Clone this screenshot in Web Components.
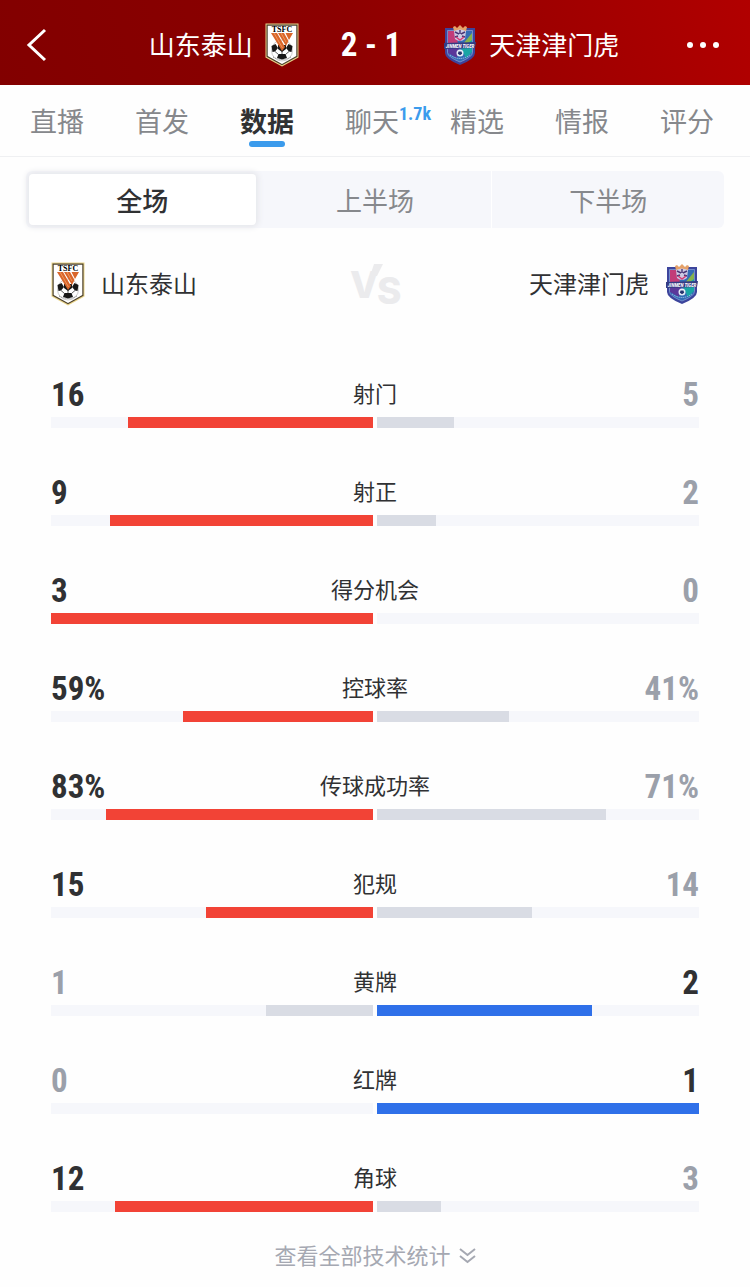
<!DOCTYPE html>
<html lang="zh-CN">
<head>
<meta charset="utf-8">
<meta name="viewport" content="width=device-width, initial-scale=1">
<title>山东泰山 2 - 1 天津津门虎</title>
<style>
    body {
        margin: 0;
        background: #fefefe;
        color: #303133;
        font-family: "Noto Sans CJK SC", sans-serif;
        --num-font: "Roboto Condensed", "Liberation Sans Narrow", "Liberation Sans", sans-serif;
        --home: #f24336;
        --away: #2f70e9;
        --muted: #9ba0aa;
        --track: #f6f7fb;
    }
</style>
</head>
<body>
<match-page></match-page>

<script>
const STATS = [
    { label: '射门', home: '16', away: '5' },
    { label: '射正', home: '9', away: '2' },
    { label: '得分机会', home: '3', away: '0' },
    { label: '控球率', home: '59%', away: '41%' },
    { label: '传球成功率', home: '83%', away: '71%' },
    { label: '犯规', home: '15', away: '14' },
    { label: '黄牌', home: '1', away: '2' },
    { label: '红牌', home: '0', away: '1' },
    { label: '角球', home: '12', away: '3' }
];

const CRESTS = {
    taishan: `
        <svg viewBox="0 0 34 44" aria-hidden="true">
            <path d="M.5.5h33v34L17 43.500.5 34.500z" fill="#e9d48a"/>
            <path d="M1.500 1.500h31v32.300L17 42.300 1.500 33.800z" fill="#4a3f2c"/>
            <path d="M2.700 2.700h28.600v30.400L17 41 2.700 33.100z" fill="#fff"/>
            <text x="17" y="8.500" text-anchor="middle" font-family="Liberation Serif, serif" font-weight="700" font-size="8">TSFC</text>
            <circle cx="17" cy="27.500" r="10.500" fill="#fff" stroke="#999" stroke-width=".5"/>
            <path d="M6.500 23l4-2 2.500 4-3 3.500-2.500.5zM27.500 23l-4-2-2.500 4 3 3.500 2.500.5zM13.500 31h7l1.500 4-5 1.500-5-1.500zM13 22h8v4l-4 3-4-3z" fill="#171717"/>
            <path d="M10 28.500l3.500 3M24 28.500l-3.500 3M17 28v3" stroke="#333" stroke-width=".8"/>
            <path d="M6 10h6l8 14-3 4zM13 10h6l4.500 8-2.500 5zM20.500 10H28l-4 7z" fill="#d9652a"/>
            <path d="M9 10l8.500 15M16 10l5 9" stroke="#f3a36c" stroke-width=".8"/>
            <path d="M8 34q9 5 18 0" fill="none" stroke="#777" stroke-width="1" stroke-dasharray="1 1"/>
        </svg>`,
    tiger: `
        <svg viewBox="0 0 34 40" aria-hidden="true">
            <path d="M2 3h30v25q0 6-15 12Q2 34 2 28z" fill="#3c449c"/>
            <path d="M4.500 5.500h25v22q0 4.500-12.500 9.500Q4.500 32 4.500 27.500z" fill="#346cb5" stroke="#9aaee0" stroke-width=".6"/>
            <path d="M5 6h7l3 12H5z" fill="#c23c78"/>
            <path d="M29 8v11h-9z" fill="#87b34a"/>
            <path d="M29 15v12l-6 6-5-10z" fill="#19a5a5"/>
            <path d="M5 23h11l-2 10-9-5z" fill="#5a389a"/>
            <path d="M10 2l2-1 2 2 3-3 3 3 2-2 2 1-1 4H11z" fill="#e5a169"/>
            <path d="M11 6q6-3 12 0l-1 8q-5 4-10 0z" fill="#cfcbe4"/>
            <path d="M12 7l4 2M22 7l-4 2M17 5v4M12 12l3-1M22 12l-3-1" stroke="#4a3778" stroke-width="1.400"/>
            <path d="M13 12l4 3 4-3" stroke="#d63c75" stroke-width="1.500" fill="none"/>
            <path d="M1 18l32-1-1 6-31 1z" fill="#343c83"/>
            <text x="17" y="22.500" text-anchor="middle" font-family="Roboto Condensed, sans-serif" font-style="italic" font-weight="700" font-size="5" fill="#fff">JINMEN TIGER</text>
            <circle cx="17" cy="28" r="3.500" fill="#e8eef8"/>
            <path d="M15.500 26.500h3l.7 2.300-2.200 1.500-2.200-1.500z" fill="#25336e"/>
            <path d="M7 30q10 7 20 0" fill="none" stroke="#b5d7f0" stroke-width="1" stroke-dasharray="1 1"/>
        </svg>`
};

class TeamCrest extends HTMLElement {
    connectedCallback() {
        this.attachShadow({ mode: 'open' }).innerHTML = `
            <style>
                :host { display: block; width: 34px; flex: none; }
                svg { display: block; width: 100%; }
            </style>
            ${CRESTS[this.getAttribute('team')]}
        `;
    }
}

class MatchHeader extends HTMLElement {
    connectedCallback() {
        this.attachShadow({ mode: 'open' }).innerHTML = `
            <style>
                :host {
                    display: flex;
                    align-items: center;
                    height: 85px;
                    padding: 4px 30px 0 26px;
                    box-sizing: border-box;
                    color: #fff;
                    background: linear-gradient(75deg, #820000 0%, #8c0000 45%, #b10000 100%);
                }
                button {
                    display: flex;
                    padding: 0;
                    border: 0;
                    background: none;
                    color: inherit;
                }
                .back { width: 30px; }
                .match {
                    flex: 1;
                    display: grid;
                    grid-template-columns: 1fr auto 1fr;
                    align-items: center;
                    column-gap: 42px;
                }
                .team {
                    display: flex;
                    align-items: center;
                    gap: 12px;
                    font-size: 26px;
                    line-height: 40px;
                    white-space: nowrap;
                }
                .team span { padding-bottom: 2px; }
                .home { justify-content: flex-end; }
                .score { font: 700 33px/40px var(--num-font); white-space: nowrap; }
            </style>
            <button class="back" aria-label="返回">
                <svg width="22" height="34" viewBox="0 0 22 34" fill="none" stroke="currentColor" stroke-width="3"><path d="M19 2 3 17l16 15"/></svg>
            </button>
            <div class="match">
                <div class="team home"><span>山东泰山</span><team-crest team="taishan"></team-crest></div>
                <div class="score">2 - 1</div>
                <div class="team"><team-crest team="tiger"></team-crest><span>天津津门虎</span></div>
            </div>
            <button aria-label="更多">
                <svg width="34" height="8" viewBox="0 0 34 8" fill="currentColor"><circle cx="4" cy="4" r="3"/><circle cx="17" cy="4" r="3"/><circle cx="30" cy="4" r="3"/></svg>
            </button>
        `;
    }
}

class MatchTabs extends HTMLElement {
    connectedCallback() {
        this.attachShadow({ mode: 'open' }).innerHTML = `
            <style>
                :host { display: block; border-bottom: 1px solid #eff0f2; }
                nav {
                    display: flex;
                    justify-content: space-between;
                    padding: 16px 36px 9px 30px;
                }
                a {
                    position: relative;
                    display: flex;
                    flex-direction: column;
                    align-items: center;
                    color: #86888c;
                    font-size: 27px;
                    line-height: 40px;
                    text-decoration: none;
                    white-space: nowrap;
                }
                a::after { content: ''; width: 36px; height: 6px; border-radius: 3px; }
                a[aria-current] { color: #303133; font-weight: 700; }
                a[aria-current]::after { background: #3b9bec; }
                sup {
                    position: absolute;
                    left: 100%;
                    top: 0;
                    color: #3b9bec;
                    font: 700 18px/26px var(--num-font);
                }
            </style>
            <nav>
                <a href="#live">直播</a>
                <a href="#lineup">首发</a>
                <a href="#stats" aria-current="page">数据</a>
                <a href="#chat">聊天<sup>1.7k</sup></a>
                <a href="#picks">精选</a>
                <a href="#intel">情报</a>
                <a href="#ratings">评分</a>
            </nav>
        `;
    }
}

class PeriodSwitch extends HTMLElement {
    connectedCallback() {
        this.attachShadow({ mode: 'open' }).innerHTML = `
            <style>
                :host {
                    display: grid;
                    grid-template-columns: repeat(3, 1fr);
                    margin: 14px 26px 0;
                    border-radius: 6px;
                    background: var(--track);
                }
                button {
                    height: 57px;
                    padding: 0;
                    border: 0;
                    background: none;
                    color: #86888c;
                    font: 400 26px/40px "Noto Sans CJK SC", sans-serif;
                }
                button:last-child { border-left: 1px solid #fff; }
                button[aria-pressed="true"] {
                    height: 51px;
                    margin: 3px;
                    border-radius: 4px;
                    background: #fff;
                    box-shadow: 0 0 6px 2px #e5e6ea;
                    color: #303133;
                    font-weight: 500;
                }
            </style>
            <button aria-pressed="true">全场</button>
            <button aria-pressed="false">上半场</button>
            <button aria-pressed="false">下半场</button>
        `;
        const buttons = this.shadowRoot.querySelectorAll('button');
        buttons.forEach(button => button.addEventListener('click', () => {
            buttons.forEach(b => b.setAttribute('aria-pressed', b === button));
        }));
    }
}

class TeamVersus extends HTMLElement {
    connectedCallback() {
        this.attachShadow({ mode: 'open' }).innerHTML = `
            <style>
                :host {
                    display: grid;
                    grid-template-columns: 1fr auto 1fr;
                    align-items: center;
                    height: 44px;
                    margin: 34px 51px 0;
                    font-size: 24px;
                    line-height: 36px;
                }
                .team { display: flex; align-items: center; gap: 16px; white-space: nowrap; }
                .team span { padding-bottom: 2px; }
                .away { justify-content: flex-end; }
                .vs { color: #ebebed; }
                .vs svg { display: block; overflow: visible; }
            </style>
            <div class="team"><team-crest team="taishan"></team-crest><span>山东泰山</span></div>
            <div class="vs">
                <svg width="50" height="44" viewBox="0 0 50 44" fill="currentColor" font-family="Inter, sans-serif" font-weight="800" font-size="37">
                    <path d="M24 2h9l-6 12h-7z"/>
                    <text x="0" y="36">V</text>
                    <text x="27" y="42">S</text>
                </svg>
            </div>
            <div class="team away"><span>天津津门虎</span><team-crest team="tiger"></team-crest></div>
        `;
    }
}

class StatRow extends HTMLElement {
    connectedCallback() {
        const home = this.getAttribute('home');
        const away = this.getAttribute('away');
        const h = parseFloat(home);
        const a = parseFloat(away);
        // percentages fill their own half, counts share the total
        const total = home.endsWith('%') ? 100 : h + a;

        this.attachShadow({ mode: 'open' }).innerHTML = `
            <style>
                :host { display: block; }
                .values {
                    display: grid;
                    grid-template-columns: 1fr auto 1fr;
                    align-items: start;
                    height: 44px;
                }
                .num { font: 700 33px/44px var(--num-font); color: var(--muted); }
                .num.lead { color: #303133; }
                .num:last-child { text-align: right; }
                .label { font-size: 22px; line-height: 38px; }
                .bars { display: grid; grid-template-columns: 1fr 1fr; gap: 4px; }
                .bar { display: flex; height: 11px; background: var(--track); }
                .bar.home { justify-content: flex-end; }
                .fill { background: #d9dce4; }
                .home .fill.lead { background: var(--home); }
                .away .fill.lead { background: var(--away); }
            </style>
            <div class="values">
                <span class="num ${h > a ? 'lead' : ''}">${home}</span>
                <span class="label">${this.getAttribute('label')}</span>
                <span class="num ${a > h ? 'lead' : ''}">${away}</span>
            </div>
            <div class="bars">
                <div class="bar home"><div class="fill ${h > a ? 'lead' : ''}" style="width: ${h / total * 100}%"></div></div>
                <div class="bar away"><div class="fill ${a > h ? 'lead' : ''}" style="width: ${a / total * 100}%"></div></div>
            </div>
        `;
    }
}

class MoreStats extends HTMLElement {
    connectedCallback() {
        this.attachShadow({ mode: 'open' }).innerHTML = `
            <style>
                :host { display: flex; justify-content: center; padding: 26px 0 12px; }
                button {
                    display: flex;
                    align-items: center;
                    gap: 8px;
                    padding: 0;
                    border: 0;
                    background: none;
                    color: #a5a8b2;
                    font: 400 22px/32px "Noto Sans CJK SC", sans-serif;
                }
                svg { margin-top: 4px; }
            </style>
            <button>
                <slot></slot>
                <svg width="17" height="16" viewBox="0 0 17 16" fill="none" stroke="currentColor" stroke-width="2"><path d="M1 1l7.500 6L16 1M1 8l7.500 6L16 8"/></svg>
            </button>
        `;
    }
}

class MatchPage extends HTMLElement {
    connectedCallback() {
        this.attachShadow({ mode: 'open' }).innerHTML = `
            <style>
                :host { display: block; }
                .stats {
                    display: flex;
                    flex-direction: column;
                    gap: 43px;
                    margin: 67px 51px 0;
                }
            </style>
            <match-header></match-header>
            <match-tabs></match-tabs>
            <main>
                <period-switch></period-switch>
                <team-versus></team-versus>
                <div class="stats">
                    ${STATS.map(s => `<stat-row label="${s.label}" home="${s.home}" away="${s.away}"></stat-row>`).join('')}
                </div>
                <more-stats>查看全部技术统计</more-stats>
            </main>
        `;
    }
}

customElements.define('team-crest', TeamCrest);
customElements.define('match-header', MatchHeader);
customElements.define('match-tabs', MatchTabs);
customElements.define('period-switch', PeriodSwitch);
customElements.define('team-versus', TeamVersus);
customElements.define('stat-row', StatRow);
customElements.define('more-stats', MoreStats);
customElements.define('match-page', MatchPage);
</script>
</body>
</html>
